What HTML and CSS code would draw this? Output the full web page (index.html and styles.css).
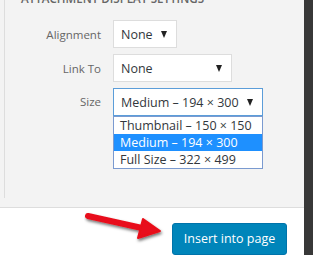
FILE: index.html
```html
<!DOCTYPE html>
<html>
<head>
<meta charset="utf-8">
<link rel="stylesheet" href="styles.css">
</head>
<body>
<div class="frame">
  <div class="main">
    <div class="settings">
      <div class="sidebar">
        <h2 class="heading">Attachment Display Settings</h2>
        <div class="row row-align">
          <span class="label">Alignment</span>
          <div class="select w-align"><span class="val">None</span><span class="caret"></span></div>
        </div>
        <div class="row row-link">
          <span class="label">Link To</span>
          <div class="select w-link"><span class="val">None</span><span class="caret"></span></div>
        </div>
        <div class="row row-size">
          <span class="label">Size</span>
          <div class="select-wrap">
            <div class="select w-size focused"><span class="val">Medium – 194 × 300</span><span class="caret"></span></div>
            <ul class="dropdown">
              <li>Thumbnail – 150 × 150</li>
              <li class="sel">Medium – 194 × 300</li>
              <li>Full Size – 322 × 499</li>
            </ul>
          </div>
        </div>
      </div>
    </div>
    <div class="toolbar">
      <svg class="arrow" width="90" height="40" viewBox="0 0 90 40">
        <defs>
          <filter id="sh" x="-20%" y="-40%" width="140%" height="180%">
            <feDropShadow dx="1" dy="2" stdDeviation="1.5" flood-color="#000" flood-opacity="0.55"/>
          </filter>
        </defs>
        <g filter="url(#sh)">
          <path d="M4 5 L58 17" stroke="#e8101a" stroke-width="6" stroke-linecap="round" fill="none"/>
          <path d="M59 8 L76 20 L54 27 Z" fill="#e8101a" stroke="#e8101a" stroke-width="2" stroke-linejoin="round"/>
        </g>
      </svg>
      <button class="btn">Insert into page</button>
    </div>
  </div>
  <div class="edge"></div>
</div>
</body>
</html>
```
FILE: styles.css
```css
* { box-sizing: border-box; }
html, body { margin: 0; padding: 0; }
body {
  width: 313px;
  height: 255px;
  overflow: hidden;
  font-family: "Open Sans", "Noto Sans", sans-serif;
  font-size: 12px;
  color: #32373c;
}
.frame { display: flex; width: 313px; height: 255px; }
.main { flex: 1; display: flex; flex-direction: column; }
.edge { width: 9px; background: #383838; }
.settings {
  height: 212px;
  background: #f3f3f3;
  padding-left: 4px;
  border-bottom: 1px solid #dddddd;
}
.sidebar {
  height: 100%;
  border-left: 1px solid #dddddd;
  position: relative;
}
.heading {
  margin: -9px 0 0 16px;
  height: 16px;
  font-size: 11.6px;
  font-weight: 600;
  text-transform: uppercase;
  color: #666;
  line-height: 16px;
  white-space: nowrap;
}
.row { display: flex; align-items: center; }
.row-align { margin-top: 13px; }
.row-link { margin-top: 6px; }
.row-size { margin-top: 6px; align-items: flex-start; }
.label {
  width: 96px;
  text-align: right;
  color: #666;
  margin-right: 12px;
  font-size: 11.5px;
}
.row-size .label { line-height: 27px; }
.select {
  height: 28px;
  background: #fff;
  border: 1px solid #dddddd;
  display: flex;
  align-items: center;
  padding-left: 7px;
  padding-right: 9px;
  font-size: 12.5px;
}
.select .val { flex: 1; }
.caret {
  width: 0; height: 0;
  border-left: 3.5px solid transparent;
  border-right: 3.5px solid transparent;
  border-top: 7px solid #222;
}
.w-align { width: 64px; }
.w-link { width: 119px; }
.w-size { width: 150px; height: 28px; }
.focused { border-color: #5b9dd9; }
.select-wrap { position: relative; }
.dropdown {
  position: absolute;
  top: 28px;
  left: 0;
  width: 150px;
  margin: 0;
  padding: 0;
  list-style: none;
  background: #fff;
  border: 1px solid #7a9ad0;
  font-size: 12.5px;
}
.dropdown li {
  height: 17px;
  line-height: 17px;
  padding-left: 6px;
}
.dropdown li.sel { background: #1e90ff; color: #fff; }
.toolbar {
  flex: 1;
  background: #fff;
  position: relative;
  display: flex;
  justify-content: flex-end;
  padding-right: 17px;
  padding-top: 15px;
}
.arrow { position: absolute; left: 84px; top: 3px; }
.btn {
  height: 32px;
  width: 115px;
  background: #0085ba;
  border: 1px solid #0073aa;
  border-radius: 3px;
  color: #fff;
  font-family: "Open Sans", "Noto Sans", sans-serif;
  font-size: 12.5px;
  padding: 0;
  text-align: center;
  line-height: 28px;
  align-self: flex-start;
}
```
